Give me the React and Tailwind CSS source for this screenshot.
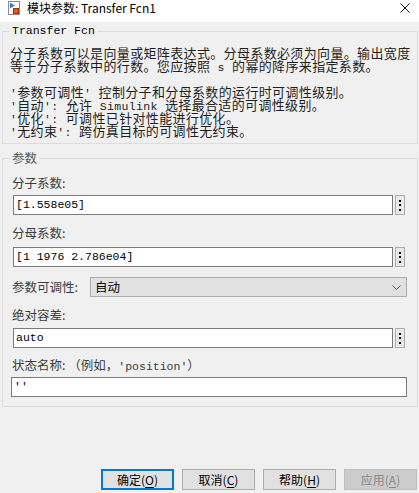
import React from 'react';

/* ── small helpers ── */
function Mono({ children }) {
    return <span className="font-['Liberation_Mono',monospace] text-[11.5px]">{children}</span>;
}

function Line({ children }) {
    return <div className="h-[13px] leading-[13px] overflow-visible">{children}</div>;
}

function DotsButton() {
    return (
        <div className="w-[10px] h-[20px] shrink-0 border border-[#adadad] bg-[#e9e9e9] flex flex-col items-center justify-center gap-[2.5px]">
            <span className="w-[2px] h-[2px] bg-black" />
            <span className="w-[2px] h-[2px] bg-black" />
            <span className="w-[2px] h-[2px] bg-black" />
        </div>
    );
}

function Label({ children, className = '' }) {
    return (
        <div className={`h-[16px] leading-[16px] text-[12.5px] text-[#3c3c3c] whitespace-nowrap ${className}`}>
            {children}
        </div>
    );
}

function ParamField({ value, className = '' }) {
    return (
        <div className={`flex items-center gap-[2px] ml-[1px] mr-[2px] ${className}`}>
            <div className="flex-1 h-[20px] bg-white border border-[#7a7a7a] pl-[2px] flex items-center font-['Liberation_Mono',monospace] text-[11.5px] text-black">
                {value}
            </div>
            <DotsButton />
        </div>
    );
}

function DialogButton({ label, hotkey, primary, disabled }) {
    const base = 'w-[73px] h-[21px] flex items-center justify-center text-[12px] leading-none';
    const look = primary
        ? 'border-2 border-[#0078d7] bg-[#e1e1e1] text-black'
        : disabled
            ? 'border border-[#bfbfbf] bg-[#cccccc] text-[#8a8a8a]'
            : 'border border-[#adadad] bg-[#e1e1e1] text-black';
    return (
        <div className={`${base} ${look}`}>
            {label}(<span className="underline underline-offset-2">{hotkey}</span>)
        </div>
    );
}

export default function App() {
    return (
        <div className="w-[419px] h-[493px] bg-[#f0f0f0] flex flex-col font-['Noto_Sans_CJK_SC','Noto_Sans',sans-serif] overflow-hidden">
            {/* ── Title bar ── */}
            <div className="h-[22px] bg-white shrink-0">
                <div className="h-[16px] flex items-center">
                    <svg className="ml-[8px]" width="12" height="14" viewBox="0 0 12 14">
                        <rect x="0.5" y="0.5" width="11" height="13" fill="#fff" stroke="#8a8a8a" />
                        <polygon points="2,1.5 7,4.5 2,7.5" fill="#2d7fd3" />
                        <rect x="5.5" y="7.5" width="5" height="5" fill="#e8541c" stroke="#a23300" />
                    </svg>
                    <span className="ml-[7px] text-[12px] text-black leading-none">模块参数: Transfer Fcn1</span>
                    <svg className="ml-auto mr-[9px]" width="10" height="10" viewBox="0 0 10 10">
                        <path d="M0.5 0.5 L9.5 9.5 M9.5 0.5 L0.5 9.5" stroke="#111" strokeWidth="1" />
                    </svg>
                </div>
            </div>

            {/* ── Description group ── */}
            <fieldset className="mt-[2px] ml-[2px] mr-[1px] border border-[#dcdcdc] pl-[7px] pr-[8px] pt-[8px] pb-[6px] min-w-0">
                <legend className="px-[2px] leading-[14px] font-['Liberation_Mono',monospace] text-[11.5px] text-black">
                    Transfer Fcn
                </legend>
                <div className="text-[13px] tracking-[0.35px] text-[#1e1e1e] whitespace-nowrap">
                    <Line>分子系数可以是向量或矩阵表达式。分母系数必须为向量。输出宽度</Line>
                    <Line>等于分子系数中的行数。您应按照<Mono> s </Mono>的幂的降序来指定系数。</Line>
                    <Line />
                    <Line><Mono>'</Mono>参数可调性<Mono>' </Mono>控制分子和分母系数的运行时可调性级别。</Line>
                    <Line><Mono>'</Mono>自动<Mono>': </Mono>允许<Mono> Simulink </Mono>选择最合适的可调性级别。</Line>
                    <Line><Mono>'</Mono>优化<Mono>': </Mono>可调性已针对性能进行优化。</Line>
                    <Line><Mono>'</Mono>无约束<Mono>': </Mono>跨仿真目标的可调性无约束。</Line>
                </div>
            </fieldset>

            {/* ── Parameters group ── */}
            <fieldset className="mt-[7px] ml-[2px] mr-[1px] border border-[#dcdcdc] pl-[7px] pr-[8px] pt-0 pb-[9px] min-w-0">
                <legend className="px-[2px] leading-[14px] text-[12.5px] text-[#555]">参数</legend>
                <div className="px-[2px] flex flex-col">
                    <Label className="mt-[10px]">分子系数:</Label>
                    <ParamField value="[1.558e05]" className="mt-[4px]" />

                    <Label className="mt-[10px]">分母系数:</Label>
                    <ParamField value="[1 1976 2.786e04]" className="mt-[6px]" />

                    <div className="mt-[10px] flex items-center h-[20px]">
                        <Label>参数可调性:</Label>
                        <div className="ml-auto w-[317px] h-[20px] bg-[#e1e1e1] border border-[#adadad] flex items-center pl-[4px] pr-[5px] text-[12.5px] text-black">
                            <span>自动</span>
                            <svg className="ml-auto" width="9" height="5" viewBox="0 0 9 5">
                                <polyline points="0.5,0.5 4.5,4.5 8.5,0.5" fill="none" stroke="#555" strokeWidth="1" />
                            </svg>
                        </div>
                    </div>

                    <Label className="mt-[10px]">绝对容差:</Label>
                    <ParamField value="auto" className="mt-[5px]" />

                    <Label className="mt-[9px]">状态名称:  （例如，<Mono>'position'</Mono>）</Label>
                    <div className="mt-[4px] ml-[-1px] h-[20px] bg-white border border-[#7a7a7a] pl-[2px] flex items-center font-['Liberation_Mono',monospace] text-[11.5px] text-black">
                        ''
                    </div>
                </div>
            </fieldset>

            <div className="flex-1" />

            {/* ── Dialog buttons ── */}
            <div className="flex justify-end gap-[8px] pr-[2px] pb-[3px]">
                <DialogButton label="确定" hotkey="O" primary />
                <DialogButton label="取消" hotkey="C" />
                <DialogButton label="帮助" hotkey="H" />
                <DialogButton label="应用" hotkey="A" disabled />
            </div>
        </div>
    );
}
